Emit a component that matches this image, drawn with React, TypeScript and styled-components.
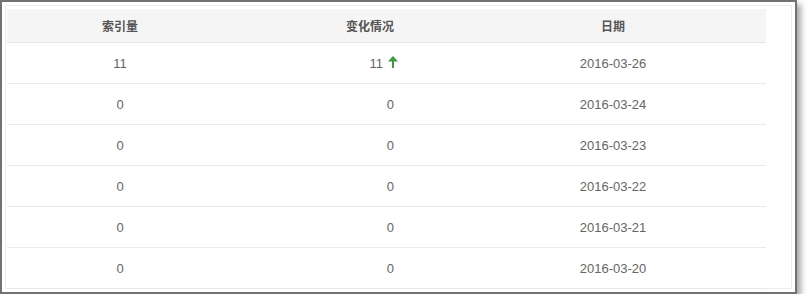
import React from 'react';
import styled, {createGlobalStyle} from 'styled-components';

const GlobalStyle = createGlobalStyle`
  html, body {
    margin: 0;
    padding: 0;
    background: #ffffff;
  }
  body {
    font-family: "Liberation Sans", "Noto Sans CJK SC", sans-serif;
  }
`;

type Row = {
  count: string;
  change: string;
  up?: boolean;
  date: string;
};

const rows: Row[] = [
  {count: '11', change: '11', up: true, date: '2016-03-26'},
  {count: '0', change: '0', date: '2016-03-24'},
  {count: '0', change: '0', date: '2016-03-23'},
  {count: '0', change: '0', date: '2016-03-22'},
  {count: '0', change: '0', date: '2016-03-21'},
  {count: '0', change: '0', date: '2016-03-20'},
];

function UpArrow() {
  return (
    <ArrowSvg width="10" height="12" viewBox="0 0 10 12">
      <path d="M5 0 L0 5.5 L10 5.5 Z" fill="#3d9a40" />
      <rect x="4" y="5" width="2" height="7" fill="#3d9a40" />
    </ArrowSvg>
  );
}

export default function App() {
  return (
    <>
      <GlobalStyle />
      <Frame>
        <Panel>
          <Table>
            <HeaderRow>
              <HeadCell>索引量</HeadCell>
              <HeadCell $align="right">变化情况</HeadCell>
              <HeadCell>日期</HeadCell>
            </HeaderRow>
            {rows.map(row => (
              <BodyRow key={row.date}>
                <Cell>{row.count}</Cell>
                <Cell $align="right">
                  {row.change}
                  {row.up && <UpArrow />}
                </Cell>
                <Cell>{row.date}</Cell>
              </BodyRow>
            ))}
          </Table>
        </Panel>
      </Frame>
    </>
  );
}

const Frame = styled.div`
  box-sizing: border-box;
  width: 797px;
  height: 294px;
  border: 2px solid #727272;
  box-shadow: 4px 4px 6px rgba(0, 0, 0, 0.35);
  padding: 3px;
  background: #ffffff;
`;

const Panel = styled.div`
  box-sizing: border-box;
  height: 100%;
  border: 1px solid #ececec;
  padding: 3px 0 0 1px;
`;

const Table = styled.div`
  width: 759px;
  display: flex;
  flex-direction: column;
`;

const gridCols = `226px 227px 306px`;

const HeaderRow = styled.div`
  display: grid;
  grid-template-columns: ${gridCols};
  height: 34px;
  box-sizing: border-box;
  background: #f5f5f5;
  border-bottom: 1px solid #e6e6e6;
  align-items: center;
`;

const BodyRow = styled.div`
  display: grid;
  grid-template-columns: ${gridCols};
  height: 41px;
  box-sizing: border-box;
  border-bottom: 1px solid #eaeaea;
  align-items: center;
`;

const HeadCell = styled.div<{$align?: 'right'}>`
  font-size: 12px;
  font-weight: bold;
  color: #555555;
  text-align: ${p => (p.$align === 'right' ? 'right' : 'center')};
  padding-right: ${p => (p.$align === 'right' ? '66px' : '0')};
`;

const Cell = styled.div<{$align?: 'right'}>`
  font-size: 13px;
  color: #666666;
  display: flex;
  align-items: center;
  justify-content: ${p => (p.$align === 'right' ? 'flex-end' : 'center')};
  padding-right: ${p => (p.$align === 'right' ? '66px' : '0')};
`;

const ArrowSvg = styled.svg`
  margin-left: 5px;
  margin-right: -4px;
  margin-top: -2px;
`;
